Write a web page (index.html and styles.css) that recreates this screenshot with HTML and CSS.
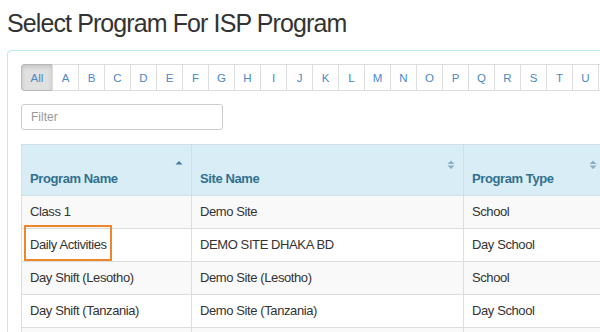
FILE: index.html
```html
<!DOCTYPE html>
<html lang="en">
<head>
  <meta charset="UTF-8" />
  <title>Select Program For ISP Program</title>
  <link rel="stylesheet" href="styles.css">
</head>
<body>
  <div class="page">
    <h1>Select Program For ISP Program</h1>

    <div class="panel">
      <div class="letters">
        <button class="active all">All</button>
        <button>A</button><button>B</button><button>C</button><button>D</button>
        <button>E</button><button>F</button><button>G</button><button>H</button>
        <button>I</button><button>J</button><button>K</button><button>L</button>
        <button>M</button><button>N</button><button>O</button><button>P</button>
        <button>Q</button><button>R</button><button>S</button><button>T</button>
        <button>U</button><button>V</button><button>W</button><button>X</button>
        <button>Y</button><button>Z</button>
      </div>

      <input type="text" class="filter" placeholder="Filter" />

      <table class="programs">
        <thead>
          <tr>
            <th class="col-name">Program Name
              <svg class="sort" width="8" height="10" viewBox="0 0 8 10"><path d="M0.5 4.5 L4 1 L7.5 4.5 Z" fill="#3f7d9f"/></svg>
            </th>
            <th class="col-site">Site Name
              <svg class="sort both" width="8" height="10" viewBox="0 0 8 10"><path d="M0.5 4 L4 0.5 L7.5 4 Z M0.5 5.5 L4 9 L7.5 5.5 Z" fill="#8aaec4"/></svg>
            </th>
            <th class="col-type">Program Type
              <svg class="sort both" width="8" height="10" viewBox="0 0 8 10"><path d="M0.5 4 L4 0.5 L7.5 4 Z M0.5 5.5 L4 9 L7.5 5.5 Z" fill="#8aaec4"/></svg>
            </th>
            <th>Status</th>
          </tr>
        </thead>
        <tbody>
          <tr><td>Class 1</td><td>Demo Site</td><td>School</td><td>Active</td></tr>
          <tr><td><span class="highlight">Daily Activities</span></td><td>DEMO SITE DHAKA BD</td><td>Day School</td><td>Active</td></tr>
          <tr><td>Day Shift (Lesotho)</td><td>Demo Site (Lesotho)</td><td>School</td><td>Active</td></tr>
          <tr><td>Day Shift (Tanzania)</td><td>Demo Site (Tanzania)</td><td>Day School</td><td>Active</td></tr>
          <tr><td>Evening Program</td><td>Demo Site</td><td>School</td><td>Active</td></tr>
        </tbody>
      </table>
    </div>
  </div>
</body>
</html>
```

FILE: styles.css
```css
html, body {
  margin: 0;
  padding: 0;
  overflow: hidden;
  background-color: #fff;
}
body {
  font-family: "Liberation Sans", Arial, sans-serif;
  color: #333;
}
.page {
  padding: 0 0 0 7px;
  width: 760px;
}
h1 {
  margin: 0 0 13px 0;
  padding-top: 9px;
  font-size: 25px;
  line-height: 28px;
  font-weight: normal;
  letter-spacing: -0.9px;
  color: #333;
}
.panel {
  border: 1px solid #bce8f1;
  border-radius: 4px;
  padding: 13px 13px 13px 13px;
}
.letters {
  display: flex;
  height: 27px;
}
.letters button {
  flex: none;
  width: 27px;
  height: 27px;
  margin: 0 0 0 -1px;
  padding: 0;
  background: #fff;
  border: 1px solid #ddd;
  color: #4a89c4;
  font-family: "Liberation Sans", Arial, sans-serif;
  font-size: 11.5px;
}
.letters button:first-child {
  margin-left: 0;
  border-radius: 3px 0 0 3px;
}
.letters .all {
  width: 32px;
}
.letters .active {
  background: #e0e0e0;
  border-color: #b8b8b8;
  box-shadow: inset 0 2px 4px rgba(0, 0, 0, 0.13);
}
.filter {
  display: block;
  box-sizing: border-box;
  width: 202px;
  height: 26px;
  margin-top: 13px;
  padding: 0 9px;
  border: 1px solid #ccc;
  border-radius: 3px;
  font-family: "Liberation Sans", Arial, sans-serif;
  font-size: 12px;
  color: #555;
}
.filter::placeholder {
  color: #999;
}
.programs {
  margin-top: 14px;
  border-collapse: collapse;
  border: 1px solid #ddd;
  width: 740px;
  table-layout: fixed;
  font-size: 13px;
  letter-spacing: -0.4px;
}
.programs th {
  position: relative;
  height: 34px;
  padding: 8px;
  vertical-align: bottom;
  text-align: left;
  background-color: #d9edf7;
  color: #31708f;
  font-weight: bold;
  line-height: 16px;
  border: 1px solid #d2dfe6;
}
.col-name { width: 153px; }
.col-site { width: 255px; }
.col-type { width: 125px; }
.programs td {
  padding: 8px;
  line-height: 16px;
  border: 1px solid #ddd;
  white-space: nowrap;
}
.programs tbody tr:nth-child(odd) td {
  background-color: #f9f9f9;
}
.sort {
  position: absolute;
  right: 8px;
  top: 15px;
}
.highlight {
  position: relative;
}
.highlight::after {
  content: "";
  position: absolute;
  left: -6px;
  right: -5px;
  top: -12px;
  bottom: -9px;
  border: 2px solid #f0862c;
}
```
